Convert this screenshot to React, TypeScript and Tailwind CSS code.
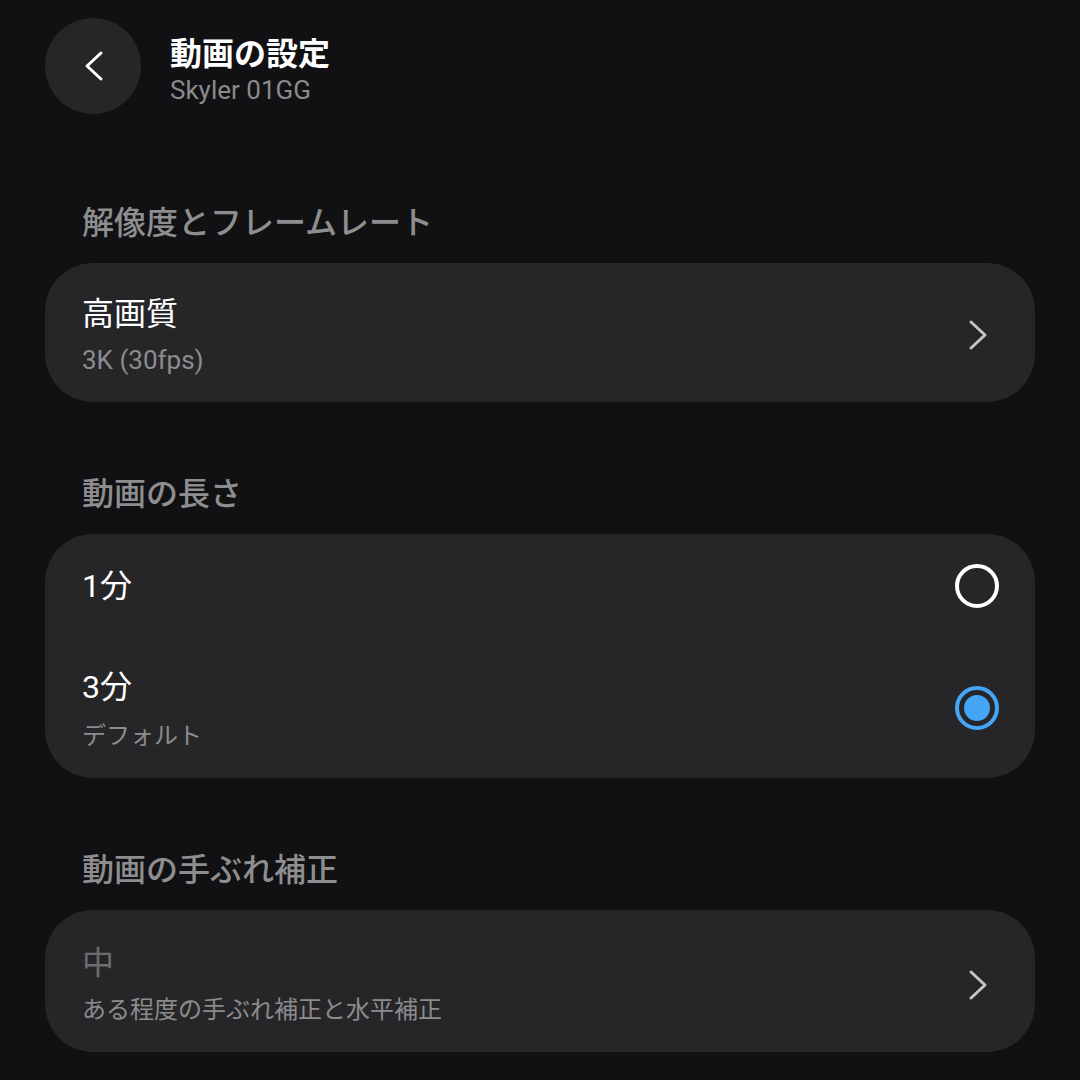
const font = { fontFamily: '"Roboto", "Noto Sans CJK JP", sans-serif' }

function Chevron({ dir, className }: { dir: "left" | "right"; className?: string }) {
  return (
    <svg width="24" height="32" viewBox="0 0 24 32" fill="none" className={className}>
      <polyline
        points={dir === "right" ? "4,3 18,16 4,29" : "20,3 6,16 20,29"}
        stroke="currentColor"
        strokeWidth={3}
        strokeLinecap="round"
        strokeLinejoin="round"
      />
    </svg>
  )
}

function SectionHeader({ children }: { children: string }) {
  return (
    <h2 className="px-[82px] pb-[20px] text-[32px] leading-[40px] font-medium text-[#8e8e90]">
      {children}
    </h2>
  )
}

function LinkRow({ title, subtitle, disabled, latin }: { title: string; subtitle: string; disabled?: boolean; latin?: boolean }) {
  return (
    <div
      className={`flex items-center justify-between rounded-[48px] bg-[#262629] pl-[37px] pr-[44px] pb-[26px] ${
        disabled ? "pt-[33px]" : "pt-[31px]"
      }`}
    >
      <div>
        <p className={`text-[32px] leading-[40px] ${disabled ? "text-[#6c6c6e]" : "text-white"}`}>{title}</p>
        <p
          className={`leading-[32px] text-[#8c8c8e] ${latin ? "text-[26px]" : "text-[24px]"} ${
            disabled ? "mt-[11px]" : "mt-[10px]"
          }`}
        >
          {subtitle}
        </p>
      </div>
      <Chevron dir="right" className="text-[#c4c4c6]" />
    </div>
  )
}

function Radio({ checked }: { checked?: boolean }) {
  if (checked) {
    return (
      <div className="flex h-[44px] w-[44px] items-center justify-center rounded-full border-[4px] border-[#45a5f5]">
        <div className="h-[26px] w-[26px] rounded-full bg-[#45a5f5]" />
      </div>
    )
  }
  return <div className="h-[44px] w-[44px] rounded-full border-[4px] border-white" />
}

export default function App() {
  return (
    <div className="min-h-screen w-[1080px] h-[1080px] overflow-hidden bg-[#111113]" style={font}>
      <div className="flex items-center gap-[29px] pl-[45px] pt-[18px]">
        <button className="flex h-[96px] w-[96px] items-center justify-center rounded-full bg-[#262628]">
          <Chevron dir="left" className="text-white" />
        </button>
        <div className="mt-[7px]">
          <h1 className="text-[32px] leading-[40px] font-bold text-white">動画の設定</h1>
          <p className="text-[26px] leading-[32px] text-[#8a8a8c]">Skyler 01GG</p>
        </div>
      </div>

      <div className="mt-[89px]">
        <SectionHeader>解像度とフレームレート</SectionHeader>
        <div className="px-[45px]">
          <LinkRow title="高画質" subtitle="3K (30fps)" latin />
        </div>
      </div>

      <div className="mt-[72px]">
        <SectionHeader>動画の長さ</SectionHeader>
        <div className="mx-[45px] rounded-[48px] bg-[#262629]">
          <div className="flex h-[104px] items-center justify-between pl-[37px] pr-[36px]">
            <p className="text-[32px] leading-[40px] text-white">1分</p>
            <Radio />
          </div>
          <div className="flex items-center justify-between pl-[37px] pr-[36px] pt-[29px] pb-[26px]">
            <div>
              <p className="text-[32px] leading-[40px] text-white">3分</p>
              <p className="mt-[13px] text-[24px] leading-[32px] text-[#8c8c8e]">デフォルト</p>
            </div>
            <div className="-mt-[4px]">
              <Radio checked />
            </div>
          </div>
        </div>
      </div>

      <div className="mt-[72px]">
        <SectionHeader>動画の手ぶれ補正</SectionHeader>
        <div className="px-[45px]">
          <LinkRow title="中" subtitle="ある程度の手ぶれ補正と水平補正" disabled />
        </div>
      </div>
    </div>
  )
}
